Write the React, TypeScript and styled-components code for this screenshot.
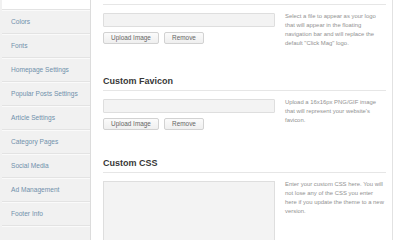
import React from "react";
import styled, { createGlobalStyle } from "styled-components";

const GlobalStyle = createGlobalStyle`
  html, body {
    margin: 0;
    padding: 0;
    background: #ffffff;
    overflow: hidden;
  }
  body {
    font-family: "Liberation Sans", Arial, sans-serif;
  }
`;

const menu = [
  "General",
  "Colors",
  "Fonts",
  "Homepage Settings",
  "Popular Posts Settings",
  "Article Settings",
  "Category Pages",
  "Social Media",
  "Ad Management",
  "Footer Info",
  "",
];

const Frame = styled.div`
  display: flex;
  width: 400px;
  height: 240px;
  overflow: hidden;
`;

const Sidebar = styled.nav`
  width: 91px;
  flex-shrink: 0;
  background: #f1f1f1;
  border-right: 1px solid #dcdcdc;
  margin-top: -14px;
  padding-left: 2px;
  box-sizing: border-box;
`;

const MenuItem = styled.div<{ $active?: boolean }>`
  height: 23px;
  line-height: 23px;
  padding-left: 9px;
  font-size: 6.6px;
  color: ${(p) => (p.$active ? "#444" : "#7090ab")};
  background: ${(p) => (p.$active ? "#ffffff" : "transparent")};
  border-bottom: 1px solid #e3e3e3;
  box-shadow: inset 0 1px 0 #fafafa;
  white-space: nowrap;
`;

const Main = styled.main`
  width: 302px;
  flex-shrink: 0;
  border-right: 1px solid #e2e2e2;
  padding: 0 6px 0 12px;
  box-sizing: border-box;
  margin-top: -11px;
`;

const Section = styled.section`
  margin-bottom: 27px;
`;

const Heading = styled.h3`
  margin: 0;
  height: 12px;
  line-height: 12px;
  padding-bottom: 3px;
  font-size: 9px;
  font-weight: bold;
  color: #383838;
  border-bottom: 1px solid #e6e6e6;
`;

const Row = styled.div`
  display: flex;
  gap: 10px;
  margin-top: 8px;
`;

const Fields = styled.div`
  width: 172px;
  flex-shrink: 0;
`;

const Input = styled.div`
  height: 14px;
  box-sizing: border-box;
  background: #f3f3f3;
  border: 1px solid #dedede;
  border-radius: 1px;
`;

const TextArea = styled.div`
  height: 80px;
  box-sizing: border-box;
  background: #f3f3f3;
  border: 1px solid #dedede;
`;

const Buttons = styled.div`
  display: flex;
  gap: 5px;
  margin-top: 5px;
`;

const Button = styled.div<{ $w: number }>`
  width: ${(p) => p.$w}px;
  height: 12px;
  box-sizing: border-box;
  border: 1px solid #d2d2d2;
  border-radius: 2px;
  background: linear-gradient(#fbfbfb, #efefef);
  font-size: 6.4px;
  line-height: 10px;
  text-align: center;
  color: #666;
`;

const Desc = styled.p`
  margin: -1px 0 0;
  font-size: 5.9px;
  line-height: 9px;
  color: #929292;
  white-space: nowrap;
`;

function Upload() {
  return (
    <>
      <Input />
      <Buttons>
        <Button $w={56}>Upload Image</Button>
        <Button $w={40}>Remove</Button>
      </Buttons>
    </>
  );
}

export default function App() {
  return (
    <Frame>
      <GlobalStyle />
      <Sidebar>
        {menu.map((m, i) => (
          <MenuItem key={i} $active={i === 0}>
            {m}
          </MenuItem>
        ))}
      </Sidebar>
      <Main>
        <Section>
          <Heading>Custom Logo</Heading>
          <Row>
            <Fields>
              <Upload />
            </Fields>
            <Desc>
              Select a file to appear as your logo
              <br />
              that will appear in the floating
              <br />
              navigation bar and will replace the
              <br />
              default "Click Mag" logo.
            </Desc>
          </Row>
        </Section>
        <Section>
          <Heading>Custom Favicon</Heading>
          <Row>
            <Fields>
              <Upload />
            </Fields>
            <Desc>
              Upload a 16x16px PNG/GIF image
              <br />
              that will represent your website's
              <br />
              favicon.
            </Desc>
          </Row>
        </Section>
        <Section>
          <Heading>Custom CSS</Heading>
          <Row>
            <Fields>
              <TextArea />
            </Fields>
            <Desc>
              Enter your custom CSS here. You will
              <br />
              not lose any of the CSS you enter
              <br />
              here if you update the theme to a new
              <br />
              version.
            </Desc>
          </Row>
        </Section>
      </Main>
    </Frame>
  );
}
